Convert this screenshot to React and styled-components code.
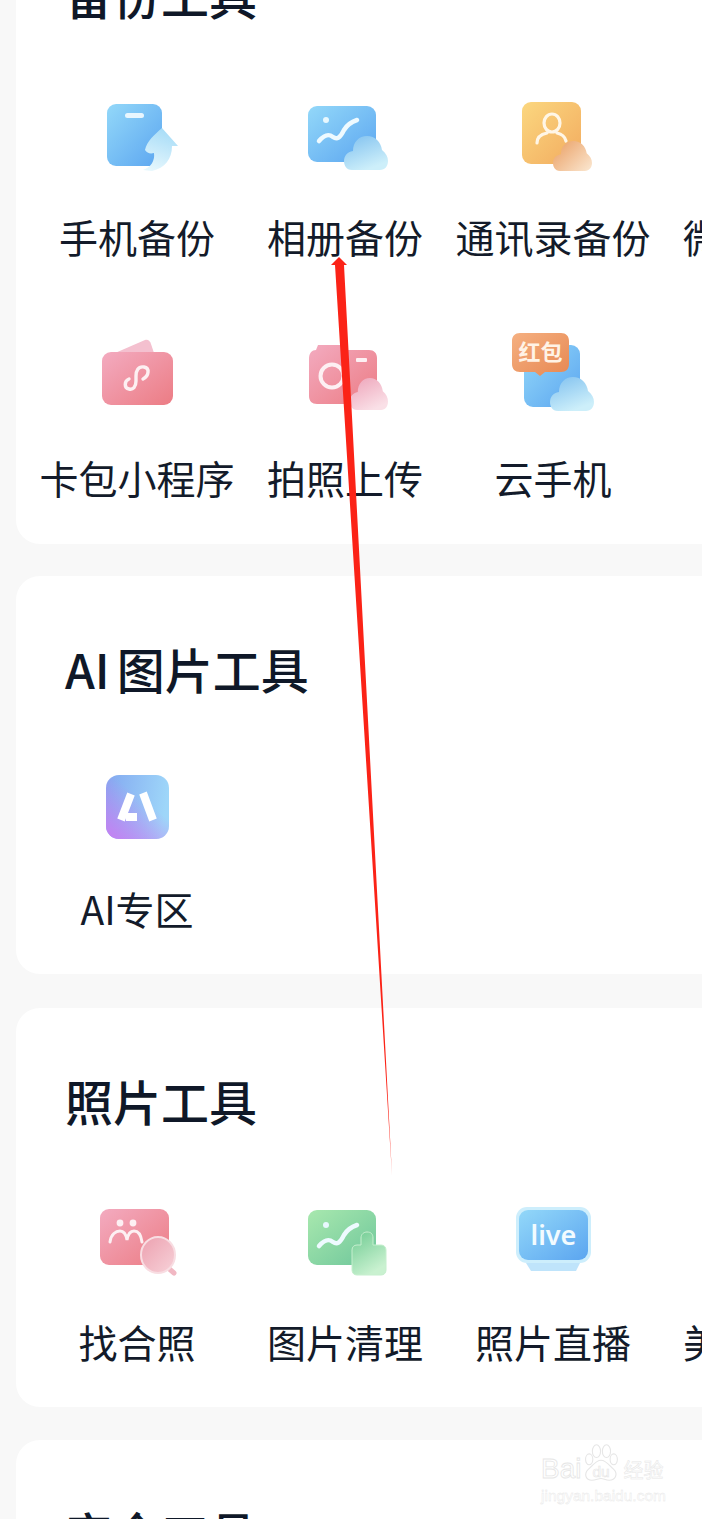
import React from "react";
import styled, { createGlobalStyle } from "styled-components";

const GlobalStyle = createGlobalStyle`
  html, body {
    margin: 0;
    padding: 0;
    background: #f8f8f8;
  }
`;

const Page = styled.div`
  position: relative;
  width: 702px;
  height: 1519px;
  overflow: hidden;
  background: #f8f8f8;
  color: #131b2a;
  font-family: "Noto Sans CJK SC", "Noto Sans", sans-serif;
`;

const Card = styled.section`
  width: 800px;
  margin: ${(p) => p.$top || 0}px 0 ${(p) => p.$after}px 16px;
  padding: 66px 0 ${(p) => p.$bottom}px;
  box-sizing: border-box;
  background: #fff;
  border-radius: 24px;
`;

const Title = styled.h2`
  margin: 0 0 ${(p) => p.$gap + 4}px 49px;
  height: 52px;
  font-size: 48px;
  line-height: 52px;
  font-weight: 500;
  white-space: nowrap;
  color: #0f1828;
`;

const TitleLatin = styled.span`
  margin-right: 7px;
`;

const Grid = styled.div`
  display: grid;
  grid-template-columns: repeat(4, 208px);
  row-gap: 62px;
  padding-left: 17px;
`;

const Item = styled.div`
  display: flex;
  flex-direction: column;
  align-items: center;
  gap: 26px;
`;

const IconSvg = styled.svg`
  display: block;
  width: 120px;
  height: 100px;
  overflow: visible;
`;

const Label = styled.span`
  height: 53px;
  font-size: 39px;
  line-height: 50px;
  white-space: nowrap;
`;

const HiddenDefs = styled.svg`
  position: absolute;
  width: 0;
  height: 0;
`;

const ArrowLayer = styled.svg`
  position: absolute;
  left: 0;
  top: 0;
  width: 702px;
  height: 1519px;
  pointer-events: none;
`;

const Watermark = styled.div`
  position: absolute;
  left: 541px;
  top: 1443px;
  width: 124px;
  color: transparent;
  font-family: "Liberation Sans", sans-serif;
  -webkit-text-stroke: 0.8px #e6e6e6;
`;

const MarkRow = styled.div`
  display: flex;
  align-items: flex-end;
  height: 40px;
`;

const MarkBai = styled.span`
  font-size: 28px;
  line-height: 28px;
`;

const MarkCn = styled.span`
  margin-left: 2px;
  font-family: "Noto Sans CJK SC", sans-serif;
  font-size: 20px;
  line-height: 27px;
  white-space: nowrap;
  -webkit-text-stroke: 0.5px #e6e6e6;
`;

const MarkUrl = styled.div`
  margin-top: 4px;
  font-size: 15.5px;
  line-height: 17px;
  white-space: nowrap;
  -webkit-text-stroke: 0.4px #e6e6e6;
`;

const gradient = (id, from, to, x1 = 0, y1 = 0, x2 = 1, y2 = 1) => (
  <linearGradient id={id} x1={x1} y1={y1} x2={x2} y2={y2} key={id}>
    <stop offset="0" stopColor={from} />
    <stop offset="1" stopColor={to} />
  </linearGradient>
);

const Gradients = () => (
  <HiddenDefs aria-hidden="true">
    <defs>
      {gradient("blue", "#93d8f9", "#5ba5f0")}
      {gradient("orange", "#fbd77f", "#f2ab5f")}
      {gradient("pink", "#f3abc0", "#ec7c84")}
      {gradient("green", "#a8e8ae", "#6ec69b")}
      {gradient("cloudBlue", "#7fc0ef", "#cdeffa", 0, 0, 0.5, 1)}
      {gradient("cloudOrange", "#eba46b", "#fbe8d2", 0, 0.2, 1, 1)}
      {gradient("cloudPink", "#eda2b8", "#fae0e7", 0, 0, 0.6, 1)}
      {gradient("thumb", "#6fcb92", "#c9f1d0", 0, 0, 0.5, 1)}
      {gradient("badge", "#f5b081", "#e78852", 0, 0, 1, 1)}
      {gradient("ai", "#83a8f0", "#9ed6f9", 0, 0, 1, 0.15)}
      {gradient("lens", "#eca0af", "#f7d2d9", 0, 0, 1, 1)}
      {gradient("arrowUp", "#a6dcf7", "#e6f7fd", 0.6, 0, 0.3, 1)}
      <linearGradient id="aiFade" x1="0.05" y1="1" x2="0.55" y2="0.35">
        <stop offset="0" stopColor="#c680f2" />
        <stop offset="1" stopColor="#c680f2" stopOpacity="0" />
      </linearGradient>
    </defs>
  </HiddenDefs>
);

// cloud shape, drawn in a 44x34 box then moved and scaled
const Cloud = ({ x, y, w, h, fill }) => (
  <path
    transform={`translate(${x} ${y}) scale(${w / 44} ${h / 34})`}
    d="M8 34C2 34 0 29 0 25C0 20 3 16 9 15C9 6 15 0 23 0C31 0 37 6 38 14C42 17 44 21 44 25C44 30 41 34 36 34Z"
    fill={`url(#${fill})`}
  />
);

const PhoneIcon = () => (
  <>
    <rect x="30" y="19" width="55" height="62" rx="9" fill="url(#blue)" />
    <rect x="48" y="28" width="19" height="5" rx="2.5" fill="#e8f6fe" />
    <path d="M85 43L101 61H95C95 74 88 83 75 86L66 85C74 82 78 76 77 68C73 69 70 68 68 65C70 56 77 50 85 43Z" fill="url(#arrowUp)" />
  </>
);

const Squiggle = () => (
  <>
    <circle cx="41" cy="35" r="3" fill="#e8f8fe" />
    <path d="M34 56C40 49 44 49 48 52C52 55 55 53 59 45C62 40 66 37 72 35" fill="none" stroke="#eefaff" strokeWidth="4.5" strokeLinecap="round" />
  </>
);

const AlbumIcon = () => (
  <>
    <rect x="23" y="21" width="68" height="56" rx="9" fill="url(#blue)" />
    <Squiggle />
    <Cloud x={59} y={51} w={44} h={34} fill="cloudBlue" />
  </>
);

const ContactIcon = () => (
  <>
    <rect x="29" y="17" width="59" height="62" rx="9" fill="url(#orange)" />
    <ellipse cx="59" cy="38" rx="8" ry="9" fill="none" stroke="#fff6e6" strokeWidth="3.2" />
    <path d="M44 58C44 52 49 49 54 48M64 48C69 49 72 52 73 56" fill="none" stroke="#fff6e6" strokeWidth="3.2" strokeLinecap="round" />
    <Cloud x={60} y={56} w={39} h={30} fill="cloudOrange" />
  </>
);

const WalletIcon = () => (
  <>
    <path d="M38 27L68 14C71 13 73 15 74 18L77 27Z" fill="#f4c0cf" />
    <rect x="25" y="26" width="71" height="53" rx="9" fill="url(#pink)" />
    <path d="M66 53C72 50 73 42 67 41C61 40 59 45 59 50V55C59 61 56 64 52 63C47 62 47 55 52 53"
      fill="none" stroke="#fdf0f2" strokeWidth="3.4" strokeLinecap="round" />
  </>
);

const CameraIcon = () => (
  <>
    <path d="M24 33C24 27 27 24 31 24L33 19H57L60 24H84C89 24 92 27 92 32V70C92 75 89 78 84 78H32C27 78 24 75 24 70Z" fill="url(#pink)" />
    <circle cx="47" cy="50" r="11.5" fill="none" stroke="#fdf0f3" strokeWidth="4" />
    <rect x="71" y="32" width="11" height="4" rx="1" fill="#fdf0f3" />
    <Cloud x={65} y={52} w={38} h={32} fill="cloudPink" />
  </>
);

const CloudPhoneIcon = () => (
  <>
    <rect x="31" y="19" width="56" height="62" rx="9" fill="url(#blue)" />
    <path d="M27 7H68C73 7 76 10 76 15V38C76 43 73 46 68 46H52L47 50L42 46H27C22 46 19 43 19 38V15C19 10 22 7 27 7Z" fill="url(#badge)" />
    <text x="47.5" y="34" textAnchor="middle" fontSize="22" fontWeight="700" fontFamily="'Noto Sans CJK SC', sans-serif" fill="#fff3e6">红包</text>
    <Cloud x={57} y={51} w={44} h={34} fill="cloudBlue" />
  </>
);

const AiIcon = () => (
  <>
    <rect x="29" y="18" width="63" height="64" rx="13" fill="url(#ai)" />
    <rect x="29" y="18" width="63" height="64" rx="13" fill="url(#aiFade)" />
    <path d="M44 63L54 37M49 60H60M66 36L76 63" fill="none" stroke="#fff" strokeWidth="8" />
  </>
);

const PeopleSearchIcon = () => (
  <>
    <rect x="23" y="19" width="69" height="56" rx="9" fill="url(#pink)" />
    <circle cx="43" cy="33" r="3.4" fill="#fdf0f3" />
    <circle cx="56" cy="33" r="3.4" fill="#fdf0f3" />
    <path d="M33 52C34 44 39 41 43 41C47 41 49 44 50 50C51 44 53 41 57 41C61 41 64 45 65 52" fill="none" stroke="#fdf0f3" strokeWidth="3" strokeLinecap="round" />
    <path d="M90 77L97 83" stroke="#f1b8c3" strokeWidth="5" strokeLinecap="round" />
    <ellipse cx="81" cy="65" rx="17" ry="18" fill="url(#lens)" stroke="#f8dde2" strokeWidth="2" />
  </>
);

const CleanIcon = () => (
  <>
    <rect x="23" y="20" width="68" height="55" rx="9" fill="url(#green)" />
    <Squiggle />
    <path d="M76 48C76 44 79 42 82 42C86 42 88 44 88 48V55H96C99 55 101 57 101 60V80C101 83 99 85 96 85H72C69 85 67 83 67 80V60C67 57 69 55 72 55H76Z" fill="url(#thumb)" stroke="#c6efce" strokeWidth="1" />
  </>
);

const LiveIcon = () => (
  <>
    <path d="M33 73H87L83 81H38Z" fill="#bfe4fb" />
    <rect x="23" y="17" width="75" height="56" rx="11" fill="#cdeefc" />
    <rect x="26" y="20" width="69" height="50" rx="9" fill="url(#blue)" />
    <text x="60.5" y="55" textAnchor="middle" fontSize="27" fontWeight="600" fontFamily="'Noto Sans', sans-serif" fill="#f2fbff">live</text>
  </>
);

const sections = [
  {
    title: "备份工具",
    top: -98,
    gap: 61,
    bottom: 39,
    after: 32,
    items: [
      { label: "手机备份", Icon: PhoneIcon },
      { label: "相册备份", Icon: AlbumIcon },
      { label: "通讯录备份", Icon: ContactIcon },
      { label: "微信备份" },
      { label: "卡包小程序", Icon: WalletIcon },
      { label: "拍照上传", Icon: CameraIcon },
      { label: "云手机", Icon: CloudPhoneIcon },
    ],
  },
  {
    title: "图片工具",
    prefix: "AI",
    gap: 59,
    bottom: 38,
    after: 34,
    items: [{ label: "AI专区", Icon: AiIcon }],
  },
  {
    title: "照片工具",
    gap: 60,
    bottom: 38,
    after: 33,
    items: [
      { label: "找合照", Icon: PeopleSearchIcon },
      { label: "图片清理", Icon: CleanIcon },
      { label: "照片直播", Icon: LiveIcon },
      { label: "美化照片" },
    ],
  },
  { title: "安全工具", gap: 60, bottom: 38, after: 0, items: [] },
];

const Section = ({ title, prefix, top, gap, bottom, after, items }) => (
  <Card $top={top} $bottom={bottom} $after={after}>
    <Title $gap={gap}>
      {prefix && <TitleLatin>{prefix}</TitleLatin>}
      {title}
    </Title>
    <Grid>
      {items.map(({ label, Icon }) => (
        <Item key={label}>
          <IconSvg viewBox="0 0 120 100">{Icon && <Icon />}</IconSvg>
          <Label>{label}</Label>
        </Item>
      ))}
    </Grid>
  </Card>
);

const Baidu = () => (
  <Watermark>
    <MarkRow>
      <MarkBai>Bai</MarkBai>
      <svg width="40" height="40" viewBox="0 0 44 42" fill="none" stroke="#e6e6e6" strokeWidth="1.2">
        <ellipse cx="9" cy="17" rx="4" ry="6" />
        <ellipse cx="17" cy="8" rx="4.5" ry="7" />
        <ellipse cx="28" cy="8" rx="4.5" ry="7" />
        <ellipse cx="36" cy="17" rx="4" ry="6" />
        <path d="M22 18C28 18 31 24 36 28C41 33 38 40 31 40C27 40 25 38 22 38C19 38 16 40 12 40C5 40 3 33 8 28C13 24 16 18 22 18Z" />
        <text x="22" y="36" textAnchor="middle" fontSize="17" fontFamily="'Liberation Sans', sans-serif" strokeWidth="0.7">du</text>
      </svg>
      <MarkCn>经验</MarkCn>
    </MarkRow>
    <MarkUrl>jingyan.baidu.com</MarkUrl>
  </Watermark>
);

export default function App() {
  return (
    <Page>
      <GlobalStyle />
      <Gradients />
      {sections.map((s) => (
        <Section key={s.title} {...s} />
      ))}
      <ArrowLayer viewBox="0 0 702 1519">
        <polygon points="339,257 347,265 344,265 392,1175 335,265 331,265" fill="#fb2317" />
      </ArrowLayer>
      <Baidu />
    </Page>
  );
}
